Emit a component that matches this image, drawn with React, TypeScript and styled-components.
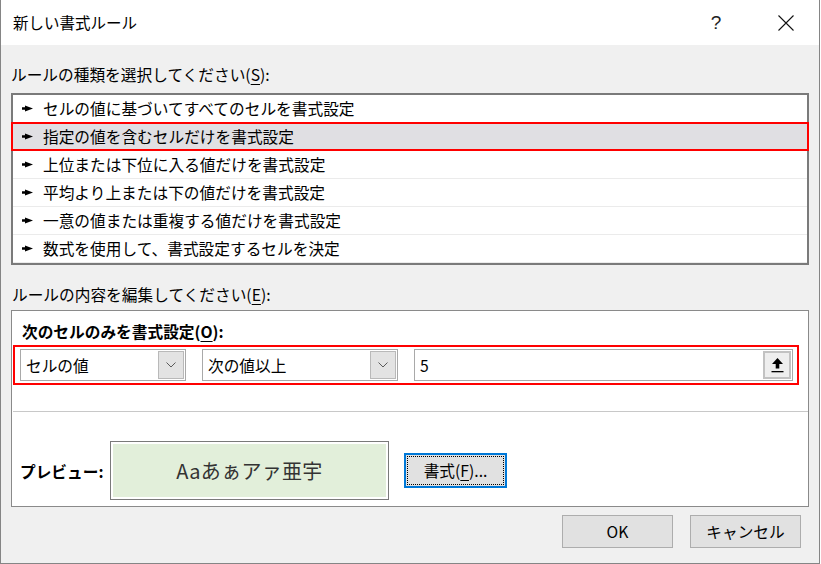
import React from 'react';
import styled, { createGlobalStyle } from 'styled-components';

const GlobalStyle = createGlobalStyle`
  html, body {
    margin: 0;
    padding: 0;
    background: #ffffff;
  }
  body {
    font-family: 'Noto Sans CJK JP', 'Noto Sans', sans-serif;
    font-size: 15.7px;
    color: #000;
  }
`;

const Window = styled.div`
  width: 820px;
  height: 564px;
  box-sizing: border-box;
  border: 1px solid #858585;
  border-top: none;
  display: flex;
  flex-direction: column;
  background: #f0f0f0;
`;

const TitleBar = styled.div`
  height: 45px;
  flex: 0 0 auto;
  background: #ffffff;
  display: flex;
  align-items: center;
  padding: 0 10px 0 12px;
`;

const Title = styled.div`
  flex: 1 1 auto;
  font-size: 15.5px;
  line-height: 22px;
  padding-bottom: 2px;
`;

const TitleButton = styled.div<{ $gap?: number }>`
  width: 46px;
  height: 44px;
  display: flex;
  align-items: center;
  justify-content: center;
  margin-left: ${(p) => p.$gap ?? 0}px;
  font-family: 'Liberation Sans', sans-serif;
  font-size: 19px;
  font-weight: 300;
  color: #222;
`;

const Body = styled.div`
  flex: 1 1 auto;
  display: flex;
  flex-direction: column;
  padding: 0 10px;
`;

const Label = styled.div<{ $indent?: number }>`
  height: 22px;
  line-height: 22px;
  margin-top: 19px;
  padding-left: ${(p) => p.$indent ?? 0}px;
  white-space: nowrap;
`;

const U = styled.span`
  text-decoration: underline;
  text-underline-offset: 3px;
`;

const ListBox = styled.div`
  margin-top: 7px;
  height: 172px;
  box-sizing: border-box;
  border: 2px solid #7a7a7a;
  background: #ffffff;
  display: flex;
  flex-direction: column;
`;

const Row = styled.div<{ $selected?: boolean }>`
  position: relative;
  height: 28px;
  box-sizing: border-box;
  display: flex;
  align-items: center;
  padding-left: 9px;
  border-bottom: 1px solid #ebebeb;
  background: ${(p) => (p.$selected ? '#e0dfe3' : '#ffffff')};
  white-space: nowrap;

  &::after {
    content: '';
    display: ${(p) => (p.$selected ? 'block' : 'none')};
    position: absolute;
    top: -1px;
    bottom: -1px;
    left: -2px;
    right: -2px;
    border: 2px solid #ff0000;
  }
`;

const Pointer = styled.svg`
  width: 11px;
  height: 7px;
  margin-right: 10px;
  flex: 0 0 auto;
`;

const Panel = styled.div`
  margin-top: 4px;
  box-sizing: border-box;
  border: 1px solid #8a8a8a;
  background: #ffffff;
  display: flex;
  flex-direction: column;
  padding-bottom: 6px;
`;

const BoldLabel = styled.div`
  height: 22px;
  line-height: 22px;
  margin: 10px 0 0 10px;
  font-weight: 700;
  white-space: nowrap;
`;

const Highlight = styled.div`
  margin: 2px 0 0 1px;
  width: 786px;
  height: 40px;
  box-sizing: border-box;
  border: 2px solid #ff0000;
  padding: 2px 4px 2px 5px;
  display: flex;
  gap: 16px;
`;

const Combo = styled.div<{ $width: number }>`
  width: ${(p) => p.$width}px;
  height: 32px;
  box-sizing: border-box;
  border: 1px solid #a9a9a9;
  padding: 1px;
  display: flex;
  align-items: stretch;
  background: #ffffff;
`;

const ComboText = styled.div`
  flex: 1 1 auto;
  display: flex;
  align-items: center;
  padding-left: 4px;
  white-space: nowrap;
`;

const DropButton = styled.div`
  width: 26px;
  box-sizing: border-box;
  border: 1px solid #b9b9b9;
  background: #e3e3e3;
  display: flex;
  align-items: center;
  justify-content: center;
`;

const RefInput = styled.div`
  flex: 1 1 auto;
  height: 32px;
  box-sizing: border-box;
  border: 1px solid #a9a9a9;
  padding: 1px;
  display: flex;
  background: #ffffff;
`;

const RefButton = styled.div`
  width: 28px;
  box-sizing: border-box;
  border: 2px solid #c2c2c2;
  background: #eeeeee;
  display: flex;
  align-items: center;
  justify-content: center;
`;

const Divider = styled.div`
  margin: 26px 0 0 1px;
  height: 1px;
  background: #c8c8c8;
`;

const PreviewRow = styled.div`
  margin-top: 29px;
  display: flex;
  align-items: center;
  padding-left: 8px;
`;

const PreviewLabel = styled.div`
  width: 90px;
  font-weight: 700;
  line-height: 22px;
  padding-top: 2px;
  white-space: nowrap;
`;

const PreviewBox = styled.div`
  width: 279px;
  height: 59px;
  box-sizing: border-box;
  border: 1px solid #7a7a7a;
  padding: 2px;
  background: #ffffff;
  display: flex;
`;

const PreviewFill = styled.div`
  flex: 1 1 auto;
  background: #e2efda;
  display: flex;
  align-items: center;
  justify-content: center;
  font-size: 20px;
  color: #333333;
  letter-spacing: 0.3px;
`;

const Button = styled.div<{ $width: number; $focused?: boolean; $offset?: number }>`
  width: ${(p) => p.$width}px;
  height: ${(p) => (p.$focused ? 35 : 33)}px;
  box-sizing: border-box;
  margin-left: ${(p) => p.$offset ?? 0}px;
  border: ${(p) => (p.$focused ? '2px solid #0078d7' : '1px solid #adadad')};
  background: #e1e1e1;
  display: flex;
  padding: ${(p) => (p.$focused ? '1px' : '0')};
`;

const ButtonFace = styled.div<{ $focused?: boolean }>`
  flex: 1 1 auto;
  display: flex;
  align-items: center;
  justify-content: center;
  border: ${(p) => (p.$focused ? '1px dotted #000' : 'none')};
  white-space: nowrap;
`;

const FooterRow = styled.div`
  margin-top: 8px;
  display: flex;
  justify-content: flex-end;
  gap: 17px;
  padding-right: 8px;
`;

const rules = [
  'セルの値に基づいてすべてのセルを書式設定',
  '指定の値を含むセルだけを書式設定',
  '上位または下位に入る値だけを書式設定',
  '平均より上または下の値だけを書式設定',
  '一意の値または重複する値だけを書式設定',
  '数式を使用して、書式設定するセルを決定',
];

const Chevron = () => (
  <svg width="10" height="6" viewBox="0 0 10 6">
    <path d="M0.5 0.5 L5 5 L9.5 0.5" fill="none" stroke="#5a5a5a" strokeWidth="1" />
  </svg>
);

export default function App() {
  return (
    <>
      <GlobalStyle />
      <Window>
        <TitleBar>
          <Title>新しい書式ルール</Title>
          <TitleButton>?</TitleButton>
          <TitleButton $gap={24}>
            <svg width="16" height="16" viewBox="0 0 16 16">
              <path d="M0.5 0.5 L15.5 15.5 M15.5 0.5 L0.5 15.5" stroke="#111" strokeWidth="1.1" />
            </svg>
          </TitleButton>
        </TitleBar>
        <Body>
          <Label>
            ルールの種類を選択してください(<U>S</U>):
          </Label>
          <ListBox>
            {rules.map((r, i) => (
              <Row key={r} $selected={i === 1}>
                <Pointer viewBox="0 0 11 7">
                  <path d="M0 2.3 L3 2.3 L3 0.6 L11 3.5 L3 6.4 L3 4.7 L0 4.7 Z" fill="#000" />
                </Pointer>
                {r}
              </Row>
            ))}
          </ListBox>
          <Label $indent={1}>
            ルールの内容を編集してください(<U>E</U>):
          </Label>
          <Panel>
            <BoldLabel>
              次のセルのみを書式設定(<U>O</U>):
            </BoldLabel>
            <Highlight>
              <Combo $width={166}>
                <ComboText>セルの値</ComboText>
                <DropButton>
                  <Chevron />
                </DropButton>
              </Combo>
              <Combo $width={196}>
                <ComboText>次の値以上</ComboText>
                <DropButton>
                  <Chevron />
                </DropButton>
              </Combo>
              <RefInput>
                <ComboText>5</ComboText>
                <RefButton>
                  <svg width="13" height="16" viewBox="0 0 13 16">
                    <path d="M6.5 1 L12 7 L8.3 7 L8.3 11.5 L4.7 11.5 L4.7 7 L1 7 Z" fill="#000" />
                    <rect x="0.5" y="14" width="12" height="1.3" fill="#000" />
                  </svg>
                </RefButton>
              </RefInput>
            </Highlight>
            <Divider />
            <PreviewRow>
              <PreviewLabel>プレビュー:</PreviewLabel>
              <PreviewBox>
                <PreviewFill>Aaあぁアァ亜宇</PreviewFill>
              </PreviewBox>
              <Button $width={103} $focused $offset={15}>
                <ButtonFace $focused>
                  書式(<U>F</U>)...
                </ButtonFace>
              </Button>
            </PreviewRow>
          </Panel>
          <FooterRow>
            <Button $width={111}>
              <ButtonFace>OK</ButtonFace>
            </Button>
            <Button $width={111}>
              <ButtonFace>キャンセル</ButtonFace>
            </Button>
          </FooterRow>
        </Body>
      </Window>
    </>
  );
}
